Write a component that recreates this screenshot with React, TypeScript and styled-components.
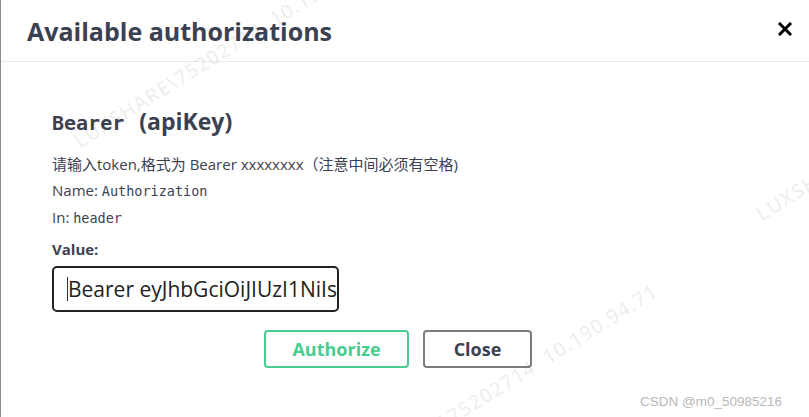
import React from 'react';
import styled, { createGlobalStyle } from 'styled-components';

const GlobalStyle = createGlobalStyle`
  html, body {
    margin: 0;
    padding: 0;
    background: #ffffff;
  }
  body {
    font-family: "Open Sans", "Noto Sans CJK SC", sans-serif;
    color: #3b4151;
  }
`;

const Page = styled.div`
  position: relative;
  width: 809px;
  height: 417px;
  overflow: hidden;
  box-sizing: border-box;
  border-left: 1px solid #8c8c8c;
  background: #fff;
`;

const Header = styled.div`
  height: 62px;
  box-sizing: border-box;
  display: flex;
  align-items: center;
  justify-content: space-between;
  padding: 0 17px 0 26px;
  border-bottom: 1px solid #ebebeb;
`;

const Title = styled.h3`
  margin: 0;
  font-size: 25px;
  font-weight: 700;
  color: #3b4151;
`;

const CloseX = styled.button`
  border: none;
  background: none;
  padding: 0;
  width: 14px;
  height: 14px;
  display: flex;
  align-items: center;
  justify-content: center;
  margin-top: -4px;
`;

const Body = styled.div`
  padding: 43px 0 0 51px;
`;

const SchemeTitle = styled.h4`
  margin: 0 0 12px;
  font-size: 23px;
  font-weight: 700;
  color: #3b4151;
  line-height: 32px;
`;

const SchemeCode = styled.code`
  font-family: "DejaVu Sans Mono", monospace;
  font-size: 20px;
  font-weight: 600;
  margin-right: 15px;
`;

const Line = styled.div`
  font-size: 15px;
  line-height: 26px;
  color: #3b4151;
`;

const Mono = styled.code`
  font-family: "DejaVu Sans Mono", monospace;
  font-size: 13.5px;
`;

const Label = styled.label`
  display: block;
  margin-top: 7px;
  font-size: 15px;
  font-weight: 700;
  line-height: 22px;
  color: #3b4151;
`;

const ValueInput = styled.div`
  margin-top: 6px;
  width: 287px;
  height: 46px;
  box-sizing: border-box;
  border: 2px solid #222;
  border-radius: 5px;
  padding: 0 0 0 13px;
  display: flex;
  align-items: center;
  overflow: hidden;
  white-space: nowrap;
  font-size: 21px;
  color: #222;
`;

const Caret = styled.span`
  flex: none;
  width: 1px;
  height: 24px;
  background: #333;
`;

const ButtonRow = styled.div`
  display: flex;
  gap: 14px;
  padding-left: 212px;
  margin-top: 18px;
`;

const Btn = styled.button<{ $tone: 'green' | 'gray'; $w: number }>`
  width: ${(p) => p.$w}px;
  height: 38px;
  box-sizing: border-box;
  border-radius: 4px;
  background: #fff;
  font-family: "Open Sans", sans-serif;
  font-size: 18px;
  font-weight: 700;
  border: 2px solid ${(p) => (p.$tone === 'green' ? '#49cc90' : '#7d7d7d')};
  color: ${(p) => (p.$tone === 'green' ? '#49cc90' : '#3b4151')};
  padding: 0;
`;

const Watermark = styled.div<{ $x: number; $y: number }>`
  position: absolute;
  left: ${(p) => p.$x}px;
  top: ${(p) => p.$y}px;
  transform: rotate(-32deg);
  transform-origin: left bottom;
  white-space: nowrap;
  font-family: "Open Sans", sans-serif;
  font-size: 20px;
  font-weight: 600;
  color: rgba(0, 0, 0, 0.08);
  pointer-events: none;
  letter-spacing: 1px;
`;

const Credit = styled.div`
  position: absolute;
  right: 27px;
  bottom: 8px;
  font-family: "Liberation Sans", sans-serif;
  font-size: 13.5px;
  color: #b8b8b8;
`;

export default function App() {
  return (
    <Page>
      <GlobalStyle />
      <Header>
        <Title>Available authorizations</Title>
        <CloseX aria-label="close">
          <svg width="14" height="14" viewBox="0 0 14 14">
            <path d="M2 2 L12 12 M12 2 L2 12" stroke="#000" strokeWidth="3" strokeLinecap="square" />
          </svg>
        </CloseX>
      </Header>
      <Body>
        <SchemeTitle>
          <SchemeCode>Bearer</SchemeCode>(apiKey)
        </SchemeTitle>
        <Line>请输入token,格式为 Bearer xxxxxxxx（注意中间必须有空格)</Line>
        <Line>
          Name: <Mono>Authorization</Mono>
        </Line>
        <Line>
          In: <Mono>header</Mono>
        </Line>
        <Label>Value:</Label>
        <ValueInput>
          <Caret />
          Bearer eyJhbGciOiJIUzI1NiIsInR5cCI6
        </ValueInput>
        <ButtonRow>
          <Btn $tone="green" $w={145}>Authorize</Btn>
          <Btn $tone="gray" $w={109}>Close</Btn>
        </ButtonRow>
      </Body>
      <Watermark $x={82} $y={127}>LUXSHARE\75202714&nbsp;&nbsp;10.190.94.71</Watermark>
      <Watermark $x={355} $y={465}>LUXSHARE\75202714&nbsp;&nbsp;10.190.94.71</Watermark>
      <Watermark $x={764} $y={200}>LUXSHARE\75202714</Watermark>
      <Credit>CSDN @m0_50985216</Credit>
    </Page>
  );
}
